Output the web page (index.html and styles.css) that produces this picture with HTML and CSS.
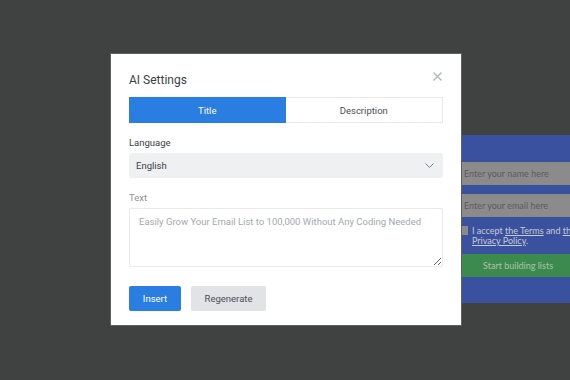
FILE: index.html
```html
<!DOCTYPE html>
<html lang="en">
<head>
    <meta charset="UTF-8">
    <meta name="viewport" content="width=device-width, initial-scale=1.0">
    <title>AI Settings</title>
    <link rel="stylesheet" href="styles.css">
</head>
<body>
    <!-- page behind the overlay -->
    <div class="signup-panel">
        <div class="signup-field">Enter your name here</div>
        <div class="signup-field">Enter your email here</div>
        <div class="signup-terms">
            <span class="signup-check"></span>
            <span>I accept <u>the Terms</u> and <u>the</u><br><u>Privacy Policy</u>.</span>
        </div>
        <div class="signup-button">Start building lists</div>
    </div>

    <div class="modal">
        <div class="modal-header">
            <h3>AI Settings</h3>
            <svg class="modal-close" width="9" height="9" viewBox="0 0 9 9"><path d="M0.5 0.5l8 8M8.5 0.5l-8 8" stroke="#b3b7bc" stroke-width="1.4"/></svg>
        </div>
        <div class="tabs">
            <button class="tab active">Title</button>
            <button class="tab">Description</button>
        </div>
        <label class="field-label">Language</label>
        <div class="select">
            <span>English</span>
            <svg width="9" height="5" viewBox="0 0 9 5"><path d="M0.5 0.5l4 4 4-4" fill="none" stroke="#7b818a" stroke-width="1"/></svg>
        </div>
        <label class="field-label muted">Text</label>
        <textarea class="text-input" placeholder="Easily Grow Your Email List to 100,000 Without Any Coding Needed"></textarea>
        <div class="actions">
            <button class="btn btn-primary">Insert</button>
            <button class="btn btn-secondary">Regenerate</button>
        </div>
    </div>
</body>
</html>
```
FILE: styles.css
```css
body {
    margin: 0;
    padding: 0;
    width: 570px;
    height: 380px;
    background-color: #404241;
    font-family: Roboto, "Liberation Sans", sans-serif;
    position: relative;
    overflow: hidden;
}

/* signup box seen through the dark overlay */
.signup-panel {
    position: absolute;
    left: 440px;
    top: 135px;
    width: 200px;
    height: 168px;
    background-color: #3a51a0;
    padding: 27px 0 0 0;
    box-sizing: border-box;
    font-family: Lato, sans-serif;
    font-size: 9px;
    display: flex;
    flex-direction: column;
    gap: 9px;
}
.signup-field {
    height: 23px;
    background-color: #8b8b8b;
    color: #5c5c5c;
    line-height: 23px;
    padding-left: 24px;
}
.signup-terms {
    display: flex;
    gap: 4px;
    color: #c9cbd3;
    line-height: 10px;
    padding-left: 19px;
    height: 20px;
    margin: 0 0 -1px 0;
}
.signup-check {
    width: 9px;
    height: 9px;
    background-color: #8b8b8b;
    flex-shrink: 0;
}
.signup-button {
    height: 23px;
    background-color: #3d8a4f;
    color: #a9c3ae;
    line-height: 23px;
    padding-left: 43px;
}

.modal {
    position: absolute;
    left: 110px;
    top: 53px;
    width: 352px;
    height: 273px;
    box-sizing: border-box;
    background-color: #fff;
    border: 1px solid #5f6160;
    padding: 0 18px 0 18px;
}
.modal-header {
    display: flex;
    justify-content: space-between;
    align-items: center;
    height: 43px;
}
.modal-header h3 {
    margin: 8px 0 0 0;
    font-size: 12px;
    font-weight: 400;
    color: #3a3f46;
}
.modal-close {
    margin-top: 2px;
    margin-right: 1px;
}
.tabs {
    display: flex;
    height: 26px;
    border: 1px solid #e6e8eb;
    box-sizing: border-box;
    margin-bottom: 13px;
}
.tab {
    flex: 1;
    border: none;
    background-color: #fff;
    font-family: inherit;
    font-size: 9.5px;
    color: #4a4f57;
    padding: 0;
}
.tab.active {
    background-color: #2a7de1;
    color: #fff;
    margin: -1px 0 -1px -1px;
}
.field-label {
    display: block;
    font-size: 9.5px;
    line-height: 14px;
    color: #3a3f46;
    height: 14px;
    margin-bottom: 3px;
}
.field-label.muted {
    color: #8d939b;
}
.select {
    height: 25px;
    background-color: #eff0f2;
    border-radius: 2px;
    display: flex;
    justify-content: space-between;
    align-items: center;
    padding: 0 9px 0 7px;
    font-size: 9.5px;
    color: #3a3f46;
    margin-bottom: 13px;
}
.text-input {
    display: block;
    width: 100%;
    height: 59px;
    box-sizing: border-box;
    border: 1px solid #e8eaed;
    border-radius: 2px;
    padding: 7px 9px;
    font-family: inherit;
    font-size: 9.5px;
    resize: vertical;
    margin: 0 0 19px 0;
}
.text-input::placeholder {
    color: #a3a8af;
}
.actions {
    display: flex;
    gap: 10px;
}
.btn {
    height: 25px;
    border: none;
    border-radius: 2px;
    font-family: inherit;
    font-size: 9.5px;
    padding: 0;
}
.btn-primary {
    width: 52px;
    background-color: #2a7de1;
    color: #fff;
}
.btn-secondary {
    width: 75px;
    background-color: #e1e3e6;
    color: #4a4f57;
}
```
